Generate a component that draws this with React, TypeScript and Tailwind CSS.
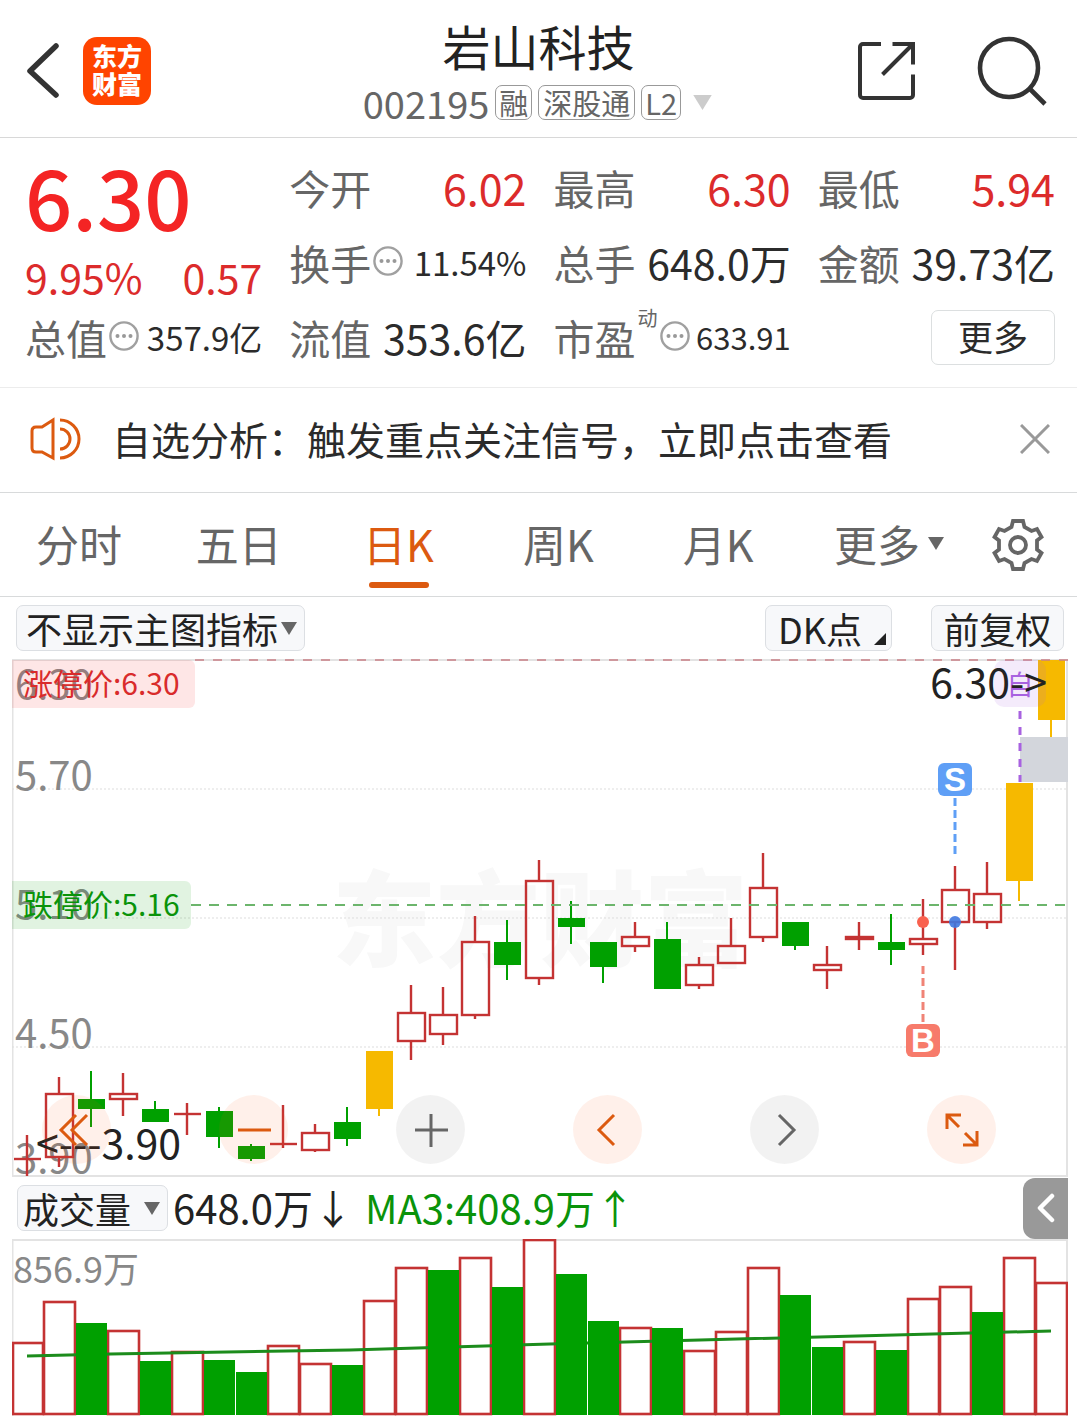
import { useState } from 'react'

type Kind = 'up' | 'down' | 'limit'
type Candle = [kind: Kind, high: number, top: number, bottom: number, low: number, volume: number]

// high, body top, body bottom, low, volume (in 万)
const candles: Candle[] = [
  ['up', 4.09, 3.98, 3.98, 3.9, 353],
  ['up', 4.36, 4.28, 3.99, 3.94, 553],
  ['down', 4.39, 4.26, 4.21, 4.13, 451],
  ['up', 4.38, 4.28, 4.26, 4.18, 411],
  ['down', 4.25, 4.21, 4.15, 4.15, 264],
  ['up', 4.24, 4.19, 4.19, 4.09, 308],
  ['down', 4.22, 4.2, 4.08, 4.03, 269],
  ['down', 4.05, 4.04, 3.98, 3.97, 211],
  ['up', 4.23, 4.05, 4.05, 4.03, 338],
  ['up', 4.14, 4.1, 4.02, 4.01, 250],
  ['down', 4.22, 4.15, 4.07, 4.04, 245],
  ['limit', 4.48, 4.48, 4.21, 4.18, 558],
  ['up', 4.79, 4.66, 4.53, 4.44, 722],
  ['down', 4.78, 4.65, 4.56, 4.51, 710],
  ['up', 5.11, 4.99, 4.65, 4.63, 769],
  ['down', 5.09, 4.99, 4.88, 4.81, 627],
  ['up', 5.37, 5.27, 4.82, 4.79, 857],
  ['down', 5.18, 5.1, 5.06, 4.98, 690],
  ['down', 4.99, 4.99, 4.87, 4.8, 460],
  ['up', 5.08, 5.01, 4.97, 4.94, 426],
  ['down', 5.08, 5.0, 4.77, 4.77, 426],
  ['up', 4.92, 4.88, 4.79, 4.77, 313],
  ['up', 5.1, 4.97, 4.89, 4.89, 406],
  ['up', 5.4, 5.24, 5.01, 4.99, 722],
  ['down', 5.08, 5.08, 4.97, 4.95, 588],
  ['down', 4.97, 4.88, 4.86, 4.77, 333],
  ['up', 5.08, 5.01, 5.0, 4.95, 357],
  ['down', 5.12, 4.99, 4.95, 4.88, 318],
  ['up', 5.19, 5.0, 4.98, 4.93, 568],
  ['up', 5.34, 5.23, 5.08, 4.86, 627],
  ['down', 5.36, 5.21, 5.08, 5.05, 504],
  ['limit', 5.73, 5.73, 5.27, 5.18, 769],
  ['limit', 6.3, 6.3, 6.02, 5.94, 648],
]

// closed above the open but below the previous close: hollow body, green volume
const hollow = [13, 25, 30]

const RED = '#c43333'
const GREEN = '#00a000'
const GOLD = '#f6b900'

const priceY = (p: number) => Math.round((6.3 - p) * 215) + 1
const centerX = (i: number) => 15 + i * 32

function Info() {
  return (
    <svg viewBox="0 0 30 30" className="size-[30px] shrink-0" aria-hidden="true">
      <circle cx="15" cy="15" r="13.6" fill="none" stroke="#a0a0a0" strokeWidth="2.4" />
      <g fill="#999">
        <circle cx="8.5" cy="15" r="2" />
        <circle cx="15" cy="15" r="2" />
        <circle cx="21.5" cy="15" r="2" />
      </g>
    </svg>
  )
}

function Triangle({ className }: { className: string }) {
  return (
    <svg viewBox="0 0 16 13" className={className} fill="currentColor" aria-hidden="true">
      <path d="M0 0H16L8 13Z" />
    </svg>
  )
}

interface StatProps {
  label: string
  value: string
  info?: boolean
  sup?: string
  valueClass?: string
}

function Stat({ label, value, info, sup, valueClass = 'text-[41px] text-[#2b2b2b]' }: StatProps) {
  return (
    <div className="flex h-[75px] items-center justify-between whitespace-nowrap">
      <div className="flex items-center gap-[2px] text-[41px] text-[#666]">
        <span>{label}</span>
        {sup && <sup className="-top-5 text-[20px]">{sup}</sup>}
        {info && <div className="mb-1"><Info /></div>}
      </div>
      <span className={valueClass}>{value}</span>
    </div>
  )
}

function Header() {
  return (
    <header className="grid h-[138px] grid-cols-[1fr_auto_1fr] items-center border-b border-[#d8d8d8] px-[27px] pt-1">
      <div className="flex items-center gap-[22px]">
        <button aria-label="返回">
          <svg viewBox="1 0 34 58" className="h-[58px] w-[34px]" fill="none" stroke="#333" strokeWidth="5.5" strokeLinecap="round" strokeLinejoin="round">
            <path d="M30 4L4 29L30 53" />
          </svg>
        </button>
        <a href="#home" className="flex size-[68px] flex-col items-center justify-center rounded-[14px] bg-[#ff4400] pb-1 text-[25px] leading-7 font-black text-white">
          <span>东方</span>
          <span>财富</span>
        </a>
      </div>
      <div className="text-center">
        <h1 className="text-[48px] leading-[48px] text-[#222]">岩山科技</h1>
        <div className="mt-4 flex items-center gap-[6px] text-[29px] leading-[33px] text-[#666]">
          <span className="text-[38px]">002195</span>
          <span className="rounded-[7px] border border-[#999] px-[3px]">融</span>
          <span className="rounded-[7px] border border-[#999] px-[4px]">深股通</span>
          <span className="rounded-[7px] border border-[#999] px-[3px]">L2</span>
          <button aria-label="切换股票" className="ml-1 text-[#ccc]">
            <Triangle className="h-[15px] w-[23px]" />
          </button>
        </div>
      </div>
      <div className="flex items-center justify-end gap-[60px]">
        <button aria-label="分享">
          <svg viewBox="0 0 60 60" className="size-[60px]" fill="none" stroke="#333" strokeWidth="4">
            <path d="M24 3H6a3 3 0 0 0-3 3V54a3 3 0 0 0 3 3H53a3 3 0 0 0 3-3V33.500" />
            <path d="M35.500 3H56V23.500M56 3L25.500 33.500" />
          </svg>
        </button>
        <button aria-label="搜索">
          <svg viewBox="0 0 73 70" className="h-[70px] w-[73px]" fill="none" stroke="#333" strokeWidth="4.600">
            <circle cx="32" cy="32" r="29" />
            <path d="M52.500 52.500L68 68" />
          </svg>
        </button>
      </div>
    </header>
  )
}

function Quote() {
  const red = 'text-[43px] text-[#dc2b2b]'
  const small = 'text-[33px] text-[#2b2b2b]'
  return (
    <section className="grid grid-cols-4 gap-x-[27px] border-b border-[#ececec] pt-3 pr-[22px] pb-3 pl-[25px]">
      <div className="row-span-2 whitespace-nowrap">
        <div className="text-[83px] leading-[90px] font-medium text-[#f42424]">6.30</div>
        <div className="mt-3 flex justify-between text-[41px] leading-[48px] text-[#dc2b2b]">
          <span>9.95%</span>
          <span>0.57</span>
        </div>
      </div>
      <Stat label="今开" value="6.02" valueClass={red} />
      <Stat label="最高" value="6.30" valueClass={red} />
      <Stat label="最低" value="5.94" valueClass={red} />
      <Stat label="换手" value="11.54%" info valueClass={small} />
      <Stat label="总手" value="648.0万" />
      <Stat label="金额" value="39.73亿" />
      <Stat label="总值" value="357.9亿" info valueClass={small} />
      <Stat label="流值" value="353.6亿" />
      <Stat label="市盈" sup="动" value="633.91" info valueClass="text-[31px] text-[#2b2b2b]" />
      <div className="flex h-[75px] items-center justify-end">
        <button className="h-[55px] w-[124px] rounded-[7px] border border-[#dcdfe0] pb-1 text-[35px] leading-[48px] text-[#2b2b2b]">更多</button>
      </div>
    </section>
  )
}

function Notice() {
  return (
    <section className="flex h-[105px] items-center border-b border-[#d8dadb] pr-[27px] pb-[2px] pl-[29px]">
      <svg viewBox="0 0 52 44" className="h-[44px] w-[52px]" fill="none" stroke="#dc5a10" strokeWidth="3" aria-hidden="true">
        <path d="M24 3V41L13 35H7Q3 35 3 31V14Q3 10 7 10H13Z" />
        <path d="M31 3A19 19 0 0 1 31 41M31 12A10 10 0 0 1 31 32" />
      </svg>
      <a href="#signal" className="ml-[31px] flex-1 pb-[2px] text-[39px] whitespace-nowrap text-[#2b2b2b]">自选分析：触发重点关注信号，立即点击查看</a>
      <button aria-label="关闭">
        <svg viewBox="0 0 30 30" className="size-[30px]" stroke="#999" strokeWidth="3">
          <path d="M1 1L29 29M29 1L1 29" />
        </svg>
      </button>
    </section>
  )
}

function PeriodTabs() {
  const [active, setActive] = useState('日K')
  return (
    <nav className="flex h-[104px] border-b border-[#d8dadb] pr-5 text-[43px] text-[#666]">
      {['分时', '五日', '日K', '周K', '月K'].map((tab) => (
        <button
          key={tab}
          onClick={() => setActive(tab)}
          className={tab === active ? 'relative flex-1 pr-[2px] pb-[2px] text-[#dc5a10]' : 'relative flex-1 pr-[2px] pb-[2px]'}
        >
          {tab}
          {tab === active && <span className="absolute bottom-2 left-1/2 h-[6px] w-[60px] -translate-x-1/2 rounded-full bg-[#dc5a10]" />}
        </button>
      ))}
      <button className="flex w-[180px] items-center justify-center gap-2 pb-[2px]">
        更多
        <Triangle className="h-[13px] w-4" />
      </button>
      <button aria-label="设置" className="flex w-[78px] items-center justify-center">
        <svg viewBox="-27 -27 54 54" className="size-[54px]" fill="none" stroke="#666" strokeWidth="3.800">
          <path d="M-5-24H5L6.500-18L13.500-14L19-16L23.500-8L19-4.500V4.500L23.500 8L19 16L13.500 14L6.500 18L5 24H-5L-6.500 18L-13.500 14L-19 16L-23.500 8L-19 4.500V-4.500L-23.500-8L-19-16L-13.500-14L-6.500-18Z" />
          <circle r="8" />
        </svg>
      </button>
    </nav>
  )
}

function Toolbar() {
  return (
    <div className="flex h-[62px] items-center justify-between pr-[13px] pl-4 text-[36px] text-[#222]">
      <div className="relative text-[#666]">
        <select aria-label="主图指标" className="h-[46px] appearance-none rounded-[7px] border border-[#dcdfe3] bg-[#f7f8fa] pr-[25px] pl-[9px] leading-[44px] text-[#222]">
          <option>不显示主图指标</option>
        </select>
        <Triangle className="pointer-events-none absolute top-[17px] right-2 h-[13px] w-4" />
      </div>
      <div className="flex gap-[39px]">
        <button className="relative h-[46px] w-[127px] rounded-[7px] border border-[#dcdfe3] bg-[#f7f8fa] pl-[12px] text-left leading-[44px]">
          DK点
          <svg viewBox="0 0 12 12" className="absolute right-[5px] bottom-[5px] size-3" fill="#222">
            <path d="M12 0V12H0Z" />
          </svg>
        </button>
        <button className="h-[46px] w-[133px] rounded-[7px] border border-[#dcdfe3] bg-[#f7f8fa] leading-[44px]">前复权</button>
      </div>
    </div>
  )
}

function CandleShape({ candle, index }: { candle: Candle; index: number }) {
  const [kind, high, top, bottom, low] = candle
  const x = centerX(index)
  const y1 = priceY(top)
  const y2 = priceY(bottom)
  const up = kind === 'up' || hollow.includes(index)

  if (!up) {
    const color = kind === 'limit' ? GOLD : GREEN
    return (
      <g fill={color}>
        <rect x={x - 1} y={priceY(high)} width="2" height={priceY(low) - priceY(high)} />
        <rect x={x - 13} y={y1} width="27" height={Math.max(y2 - y1, 2)} />
      </g>
    )
  }
  return (
    <g stroke={RED} strokeWidth="2.400" fill="none">
      <path d={`M${x} ${priceY(high)}V${y1}M${x} ${y2}V${priceY(low)}`} />
      {top === bottom ? (
        <path d={`M${x - 13} ${y1}H${x + 14}`} />
      ) : (
        <rect x={x - 13} y={y1} width="27" height={y2 - y1} />
      )}
    </g>
  )
}

function PriceChart() {
  return (
    <svg viewBox="0 0 1056 518" className="block w-full" role="img" aria-label="日K线">
      <text x="528" y="300" textAnchor="middle" fontSize="104" fontWeight="900" fill="#f8f8f8">东方财富</text>
      <path d="M0.500 1V517M1055 1V517M0 1H1056M0 517H1056" stroke="#e3e3e3" strokeWidth="2" />
      <path d="M0 130H1056M0 259H1056M0 388H1056" stroke="#ddd" strokeDasharray="2 2" />
      <g fontSize="40" fill="#888">
        <text x="3" y="40">6.30</text>
        <text x="3" y="131">5.70</text>
        <text x="3" y="260">5.10</text>
        <text x="3" y="389">4.50</text>
        <text x="3" y="514">3.90</text>
      </g>
      <rect x="1008" y={priceY(5.94)} width="48" height="45" fill="#d3d6dc" />
      {candles.map((candle, i) => (
        <CandleShape key={i} candle={candle} index={i} />
      ))}

      <path d="M183 1H1056" stroke="#c98087" strokeWidth="1.500" strokeDasharray="9 9" />
      <path d="M179 246H1056" stroke="#6cb56c" strokeWidth="2" strokeDasharray="10 8" />
      <path d="M0 1H177a6 6 0 0 1 6 6V43a6 6 0 0 1-6 6H0Z" fill="#f43232" fillOpacity="0.120" />
      <path d="M0 222H173a6 6 0 0 1 6 6V264a6 6 0 0 1-6 6H0Z" fill="#0aa00a" fillOpacity="0.120" />
      <text x="11" y="36" fontSize="30" fill="#d92b2b">涨停价:6.30</text>
      <text x="11" y="257" fontSize="30" fill="#0a930a">跌停价:5.16</text>

      {/* sell / buy marks */}
      <g fontFamily="Liberation Sans, sans-serif" fontSize="33" fontWeight="700" textAnchor="middle" fill="#fff">
        <rect x="926" y="104" width="34" height="33" rx="6" fill="#5f9ff6" />
        <text x="943" y="132">S</text>
        <rect x="894" y="365" width="34" height="33" rx="6" fill="#f77b6b" />
        <text x="911" y="393">B</text>
      </g>
      <path d="M943 139V195" stroke="#5f9ff6" strokeWidth="3" strokeDasharray="8 4" />
      <path d="M911 307V363" stroke="#f08376" strokeWidth="3" strokeDasharray="8 4" />
      <circle cx="911" cy="263" r="6" fill="#f9614f" />
      <circle cx="943" cy="263" r="6" fill="#3f78e0" fillOpacity="0.900" />

      <rect x="982" y="1" width="52" height="47" rx="10" fill="#a862e0" fillOpacity="0.130" />
      <text x="1008" y="36" fontSize="27" textAnchor="middle" fill="#a862e0">自</text>
      <path d="M1008 52V123" stroke="#a862e0" strokeWidth="3" strokeDasharray="8 8" />

      <text x="1035" y="39" fontSize="41" textAnchor="end" fill="#222">6.30-&gt;</text>
      <text x="24" y="500" fontSize="41" fill="#222">&lt;---3.90</text>
    </svg>
  )
}

const controls = [
  { label: '最左', warm: true, d: 'M-1-15L-16 0L-1 15M10-15L-5 0L10 15' },
  { label: '缩小', warm: true, d: 'M-16 0H17' },
  { label: '放大', warm: false, d: 'M-16 0H17M0-16V17' },
  { label: '左移', warm: true, d: 'M6-15L-9 0L6 15' },
  { label: '右移', warm: false, d: 'M-6-15L9 0L-6 15' },
  { label: '全屏', warm: true, d: 'M-15-1V-15H-1M-15-15L-3-3M15 1V15H1M15 15L3 3' },
]

function ChartControls() {
  return (
    <div className="absolute right-[72px] bottom-[13px] left-[30px] flex justify-between">
      {controls.map(({ label, warm, d }) => (
        <button
          key={label}
          aria-label={label}
          className={`flex size-[69px] items-center justify-center rounded-full ${warm ? 'bg-[#fa5a14]/9 text-[#dc5a10]' : 'bg-black/5 text-[#666]'}`}
        >
          <svg viewBox="-20 -20 40 40" className="size-10" fill="none" stroke="currentColor" strokeWidth="3">
            <path d={d} />
          </svg>
        </button>
      ))}
    </div>
  )
}

function VolumeHeader() {
  return (
    <div className="flex h-[62px] items-center pl-[5px] text-[40px] whitespace-nowrap">
      <div className="relative mr-[5px] text-[#666]">
        <select aria-label="副图指标" className="block h-[46px] appearance-none rounded-[7px] border border-[#dcdfe3] bg-[#f7f8fa] pr-[35px] pl-[5px] text-[36px] leading-[44px] text-[#222]">
          <option>成交量</option>
        </select>
        <Triangle className="pointer-events-none absolute top-[17px] right-2 h-[13px] w-4" />
      </div>
      <span className="mr-3 pb-[2px] text-[#222]">648.0万↓</span>
      <span className="pb-[2px] text-[#0a930a]">MA3:408.9万↑</span>
      <button aria-label="展开" className="ml-auto flex h-[61px] w-[45px] items-center justify-center rounded-l-[12px] bg-[#999]">
        <svg viewBox="0 0 18 30" className="h-[30px] w-[18px]" fill="none" stroke="#fff" strokeWidth="4.500" strokeLinecap="round" strokeLinejoin="round">
          <path d="M15 3L3 15L15 27" />
        </svg>
      </button>
    </div>
  )
}

function VolumeChart() {
  const bars = candles.map(([kind, , , , , volume], i) => ({
    x: centerX(i),
    height: Math.round((volume / 857) * 175),
    green: kind === 'down',
  }))
  return (
    <svg viewBox="0 0 1056 178" className="block w-full" role="img" aria-label="成交量">
      <path d="M0.500 1V177M1055 1V177M0 1H1056" fill="none" stroke="#e3e3e3" strokeWidth="2" />
      <text x="1" y="44" fontSize="36" fill="#888">856.9万</text>
      <g fill="none" stroke={RED} strokeWidth="2.600">
        {bars.filter((bar) => !bar.green).map((bar) => (
          <rect key={bar.x} x={Math.max(bar.x - 15, 1)} y={176 - bar.height} width={bar.x === 15 ? 30 : 31} height={bar.height - 1} />
        ))}
      </g>
      <path d="M15 117L98 115L338 111L538 105L688 101L1039 92" fill="none" stroke="#1c8c1c" strokeWidth="3" />
      <g fill={GREEN}>
        {bars.filter((bar) => bar.green).map((bar) => (
          <rect key={bar.x} x={bar.x - 15} y={176 - bar.height} width="31" height={bar.height} />
        ))}
      </g>
    </svg>
  )
}

export default function App() {
  return (
    <main className="min-h-screen overflow-hidden bg-white font-['Noto_Sans_CJK_SC',sans-serif] leading-tight">
      <Header />
      <Quote />
      <Notice />
      <PeriodTabs />
      <Toolbar />
      <div className="pr-[9px] pl-3">
        <div className="relative">
          <PriceChart />
          <ChartControls />
        </div>
        <VolumeHeader />
        <VolumeChart />
      </div>
    </main>
  )
}
